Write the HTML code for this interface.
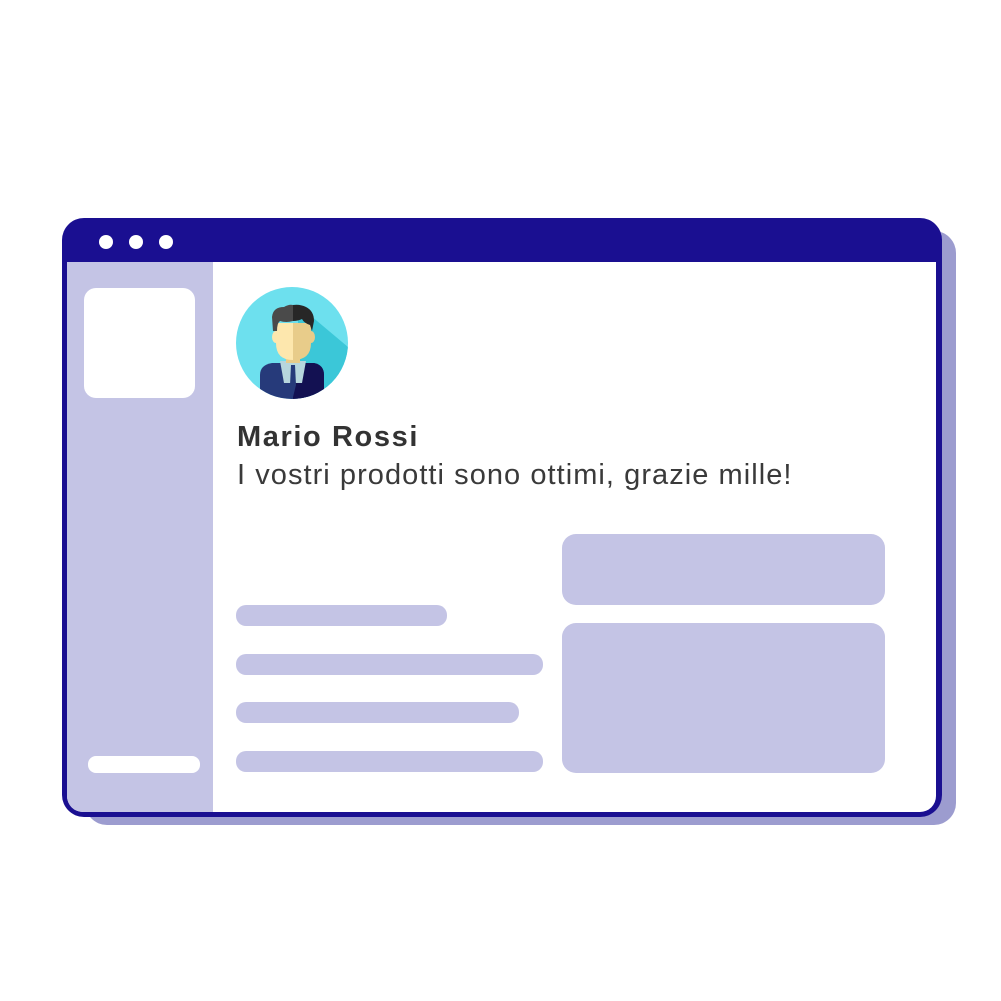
<!DOCTYPE html>
<html><head><meta charset="utf-8"><style>
body{margin:0;width:1001px;height:1001px;background:#fff;position:relative;overflow:hidden;font-family:"Liberation Sans","DejaVu Sans",sans-serif}
div{position:absolute;box-sizing:border-box}
.l{background:#c4c4e5;border-radius:10px;height:21px;left:236px}
.dot{width:14px;height:14px;border-radius:50%;background:#fff;top:235px}
</style></head><body>
<div style="left:85px;top:231px;width:871px;height:594px;background:#9c9ccf;border-radius:22px"></div>
<div style="left:62px;top:218px;width:880px;height:599px;background:#1a0f91;border-radius:22px"></div>
<div style="left:67px;top:262px;width:869px;height:550px;background:#fff;border-radius:0 0 16px 16px;overflow:hidden">
  <div style="left:0;top:0;width:146px;height:550px;background:#c4c4e5"></div>
</div>
<div class="dot" style="left:99px"></div>
<div class="dot" style="left:129px"></div>
<div class="dot" style="left:159px"></div>
<div style="left:84px;top:288px;width:111px;height:110px;background:#fff;border-radius:12px"></div>
<div style="left:88px;top:756px;width:112px;height:17px;background:#fff;border-radius:8px"></div>
<svg style="position:absolute;left:236px;top:287px" width="112" height="112" viewBox="0 0 112 112">
<defs><clipPath id="c"><circle cx="56" cy="56" r="56"/></clipPath></defs>
<g clip-path="url(#c)">
<rect width="112" height="112" fill="#6de0ee"/>
<polygon points="62,18 112,60 112,112 62,112" fill="#3bc7d8"/>
<path d="M24,88 Q24,78 36,76 L78,76 Q88,78 88,88 L88,120 L24,120 Z" fill="#263a7a"/>
<path d="M57,76 L78,76 Q88,78 88,88 L88,120 L57,120 Z" fill="#131152"/>
<polygon points="44,74 70,74 66,96 48,96" fill="#b7d6dd"/>
<polygon points="55,78 59,78 60,98 57,110 54,98" fill="#263a7a"/>
<rect x="50" y="62" width="14" height="14" fill="#e8cc8a"/>
<ellipse cx="40" cy="50" rx="4" ry="6" fill="#fde7ad"/>
<ellipse cx="75" cy="50" rx="4" ry="6" fill="#e8cc8a"/>
<path d="M40,36 L40,56 Q40,73 57,73 L57,36 Z" fill="#fde7ad"/>
<path d="M75,36 L75,56 Q75,73 57,73 L57,36 Z" fill="#e8cc8a"/>
<path d="M37,44 L36,30 Q37,20 48,20 Q53,17 57,18 L57,34 Q50,36 44,34 Q41,36 41,44 Z" fill="#4a4a4a"/>
<path d="M57,18 Q64,17 70,20 Q78,24 78,34 L76,44 L74,38 Q68,36 66,32 Q62,34 57,34 Z" fill="#272727"/>
</g></svg>
<div style="left:237px;top:421px;font-size:29px;font-weight:bold;color:#333;white-space:nowrap;letter-spacing:1.6px">Mario Rossi</div>
<div style="left:237px;top:459px;font-size:29px;color:#3a3a3a;white-space:nowrap;letter-spacing:1.05px">I vostri prodotti sono ottimi, grazie mille!</div>
<div class="l" style="top:605px;width:211px"></div>
<div class="l" style="top:654px;width:307px"></div>
<div class="l" style="top:702px;width:283px"></div>
<div class="l" style="top:751px;width:307px"></div>
<div style="left:562px;top:534px;width:323px;height:71px;background:#c4c4e5;border-radius:14px"></div>
<div style="left:562px;top:623px;width:323px;height:150px;background:#c4c4e5;border-radius:14px"></div>
</body></html>
